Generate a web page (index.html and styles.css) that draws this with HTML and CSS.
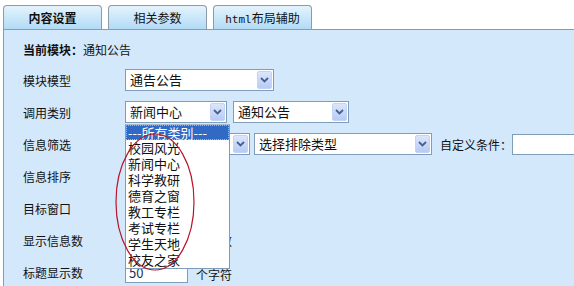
FILE: index.html
```html
<!DOCTYPE html>
<html lang="zh-CN">
<head>
    <meta charset="UTF-8">
    <title>内容设置</title>
    <link rel="stylesheet" href="styles.css">
</head>
<body>
    <div class="tabs">
        <div class="tab active">内容设置</div>
        <div class="tab">相关参数</div>
        <div class="tab"><span class="mono">html</span>布局辅助</div>
    </div>

    <div class="panel">
        <div class="current"><b>当前模块：</b>通知公告</div>

        <div class="row">
            <label>模块模型</label>
            <div class="select w149">通告公告<span class="arrow"><svg width="9" height="6" viewBox="0 0 9 6"><path d="M1 1 L4.5 4.5 L8 1" fill="none" stroke="#4a5f8c" stroke-width="1.8"/></svg></span></div>
        </div>

        <div class="row">
            <label>调用类别</label>
            <div class="select w102">新闻中心<span class="arrow"><svg width="9" height="6" viewBox="0 0 9 6"><path d="M1 1 L4.5 4.5 L8 1" fill="none" stroke="#4a5f8c" stroke-width="1.8"/></svg></span></div>
            <div class="select w116 gap6">通知公告<span class="arrow"><svg width="9" height="6" viewBox="0 0 9 6"><path d="M1 1 L4.5 4.5 L8 1" fill="none" stroke="#4a5f8c" stroke-width="1.8"/></svg></span></div>
        </div>

        <div class="row">
            <label>信息筛选</label>
            <div class="select w125">全部信息<span class="arrow"><svg width="9" height="6" viewBox="0 0 9 6"><path d="M1 1 L4.5 4.5 L8 1" fill="none" stroke="#4a5f8c" stroke-width="1.8"/></svg></span></div>
            <div class="select w178 gap4">选择排除类型<span class="arrow"><svg width="9" height="6" viewBox="0 0 9 6"><path d="M1 1 L4.5 4.5 L8 1" fill="none" stroke="#4a5f8c" stroke-width="1.8"/></svg></span></div>
            <span class="note">自定义条件：</span>
            <div class="input w64"></div>
        </div>

        <div class="row">
            <label>信息排序</label>
            <div class="select w90">按时间<span class="arrow"></span></div>
        </div>

        <div class="row">
            <label>目标窗口</label>
            <div class="select w90">新窗口<span class="arrow"></span></div>
        </div>

        <div class="row">
            <label>显示信息数</label>
            <div class="input w63">10</div>
            <span class="note">信息数</span>
        </div>

        <div class="row last">
            <label>标题显示数</label>
            <div class="input w63">50</div>
            <span class="note">个字符</span>
        </div>

        <ul class="dropdown">
            <li class="selected">---所有类别---</li>
            <li>校园风光</li>
            <li>新闻中心</li>
            <li>科学教研</li>
            <li>德育之窗</li>
            <li>教工专栏</li>
            <li>考试专栏</li>
            <li>学生天地</li>
            <li>校友之家</li>
        </ul>
    </div>

    <svg class="mark" width="574" height="286" viewBox="0 0 574 286">
        <ellipse cx="155" cy="202" rx="39" ry="68" fill="none" stroke="#b8142c" stroke-width="1.2"/>
    </svg>
</body>
</html>
```

FILE: styles.css
```css
body { margin: 0; width: 574px; height: 286px; overflow: hidden; position: relative; background: #fff; font-family: "Noto Sans CJK SC", "Noto Sans", sans-serif; font-size: 12px; color: #111; }

.tabs { display: flex; gap: 6px; padding: 5px 0 0 3px; height: 24px; }
.tab { width: 97px; height: 23px; border: 1px solid #8d9aa8; border-bottom: none; border-radius: 4px 4px 0 0; background: linear-gradient(#e4f3fd, #b2dbf6); text-align: center; line-height: 24px; font-size: 12px; }
.tab.active { font-weight: bold; }
.mono { font-family: "DejaVu Sans Mono", monospace; font-size: 11px; }

.panel { position: relative; margin-left: 3px; height: 256px; border-left: 1px solid #8d9aa8; border-top: 1px solid #8d9aa8; background: #d4e8fb; padding-left: 19px; overflow: hidden; }
.current { padding-top: 12px; line-height: 16px; margin-bottom: 6px; }
.current b { font-weight: bold; }

.row { display: flex; align-items: center; height: 32px; }
.row label { width: 102px; flex: none; }
.row.last .note { margin-top: 4px; }

.select { position: relative; box-sizing: border-box; height: 22px; flex: none; background: #fff; border: 1px solid #7f9db9; font-size: 13px; line-height: 20px; padding-left: 4px; white-space: nowrap; overflow: hidden; }
.arrow { position: absolute; right: 1px; top: 1px; width: 15px; height: 18px; box-sizing: border-box; border: 1px solid #c3d3f5; border-radius: 2px; background: linear-gradient(#dbe6fd, #b8cbf4); display: flex; align-items: center; justify-content: center; }

.input { box-sizing: border-box; height: 21px; flex: none; background: #fff; border: 1px solid #7f9db9; font-size: 13px; line-height: 19px; padding-left: 3px; color: #1d2f58; }

.w149 { width: 149px; }
.w102 { width: 102px; }
.w116 { width: 116px; }
.w125 { width: 125px; }
.w178 { width: 178px; }
.w90 { width: 90px; }
.w63 { width: 63px; }
.w64 { width: 64px; }
.gap6 { margin-left: 6px; }
.gap4 { margin-left: 4px; }
.note { margin-left: 8px; font-size: 12px; white-space: nowrap; }

.dropdown { position: absolute; left: 121px; top: 94px; width: 103px; margin: 0; padding: 0; list-style: none; background: #fff; border: 1px solid #7f9db9; border-top-color: #a8b8cc; font-size: 13px; }
.dropdown li { height: 16px; line-height: 16px; padding-left: 2px; white-space: nowrap; }
.dropdown li.selected { height: 15px; line-height: 15px; background: #316ac5; color: #fff; outline: 1px dotted #9fb6de; outline-offset: -1px; }

.mark { position: absolute; left: 0; top: 0; pointer-events: none; }
```
